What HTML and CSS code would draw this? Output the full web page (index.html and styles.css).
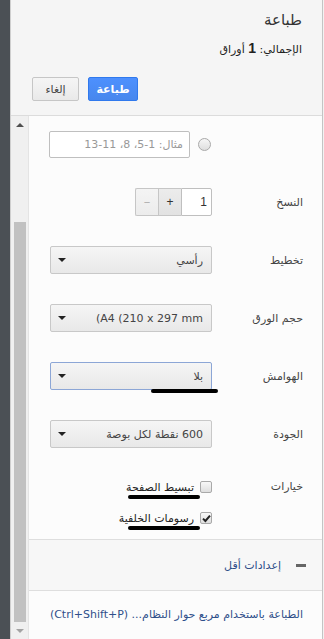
FILE: index.html
```
<!DOCTYPE html>
<html lang="ar">
<head>
    <meta charset="UTF-8">
    <meta name="viewport" content="width=device-width, initial-scale=1.0">
    <title>طباعة</title>
    <link rel="stylesheet" href="styles.css">
</head>
<body>
<div class="app">
    <div class="strip"></div>
    <div class="sidebar">
        <div class="header" dir="rtl">
            <div class="title">طباعة</div>
            <div class="summary">الإجمالي: <b>1</b> أوراق</div>
            <div class="actions">
                <button class="btn btn-print">طباعة</button>
                <button class="btn btn-cancel">إلغاء</button>
            </div>
        </div>

        <div class="main">
            <div class="scrollbar">
                <div class="sb-btn"><span class="tri tri-up"></span></div>
                <div class="sb-track"><div class="sb-thumb"></div></div>
                <div class="sb-btn"><span class="tri tri-down"></span></div>
            </div>

            <div class="settings" dir="rtl">
                <div class="row first">
                    <div class="label"></div>
                    <div class="control range">
                        <span class="radio"></span>
                        <div class="text-input placeholder">مثال: 1-5، 8، 11-13</div>
                    </div>
                </div>

                <div class="row">
                    <div class="label">النسخ</div>
                    <div class="control">
                        <div class="copies">
                            <div class="copies-num">1</div>
                            <div class="step step-plus">+</div>
                            <div class="step step-minus">−</div>
                        </div>
                    </div>
                </div>

                <div class="row">
                    <div class="label">تخطيط</div>
                    <div class="control">
                        <div class="select"><span>رأسي</span><span class="caret"></span></div>
                    </div>
                </div>

                <div class="row">
                    <div class="label">حجم الورق</div>
                    <div class="control">
                        <div class="select"><bdo dir="ltr">(A4 (210 x 297 mm</bdo><span class="caret"></span></div>
                    </div>
                </div>

                <div class="row">
                    <div class="label">الهوامش</div>
                    <div class="control">
                        <div class="select focused"><span>بلا</span><span class="caret"></span>
                            <span class="mark mark-margins"></span>
                        </div>
                    </div>
                </div>

                <div class="row">
                    <div class="label">الجودة</div>
                    <div class="control">
                        <div class="select"><span>600 نقطة لكل بوصة</span><span class="caret"></span></div>
                    </div>
                </div>

                <div class="options">
                    <div class="label">خيارات</div>
                    <div class="option-list">
                        <div class="option">
                            <span class="checkbox"></span>
                            <span class="option-text">تبسيط الصفحة</span>
                            <span class="mark mark-option"></span>
                        </div>
                        <div class="option">
                            <span class="checkbox checked">
                                <svg width="9" height="9" viewBox="0 0 9 9"><path d="M1 4.6 L3.4 7 L8 1.6" fill="none" stroke="#222" stroke-width="2"/></svg>
                            </span>
                            <span class="option-text">رسومات الخلفية</span>
                            <span class="mark mark-option"></span>
                        </div>
                    </div>
                </div>

                <div class="more">
                    <span class="minus"></span>
                    <span class="more-text">إعدادات أقل</span>
                </div>

                <div class="system">الطباعة باستخدام مربع حوار النظام... (Ctrl+Shift+P)</div>
            </div>
        </div>
    </div>
    <div class="edge"></div>
</div>
</body>
</html>
```

FILE: styles.css
```
* { box-sizing: border-box; margin: 0; padding: 0; }
html, body { width: 324px; height: 639px; overflow: hidden; }
body { font-family: "DejaVu Sans", "Noto Sans", sans-serif; font-size: 11px; color: #333; background: #fff; }

.app { display: flex; height: 639px; }
.strip { width: 10px; background: #4b5055; flex: none; }
.sidebar { width: 313px; display: flex; flex-direction: column; border-left: 1px solid #cfcfcf; border-right: 1px solid #c4c4c4; }
.edge { width: 1px; background: #f2f2f2; }

/* header */
.header { height: 116px; background: #f5f5f5; border-bottom: 1px solid #dcdcdc; padding: 9px 20px 0 21px; flex: none; }
.title { font-size: 15px; color: #333; line-height: 22px; }
.summary { margin-top: 8px; font-size: 11px; color: #222; line-height: 18px; letter-spacing: -0.2px; }
.summary b { font-size: 14px; font-family: "Liberation Sans", sans-serif; }
.actions { display: flex; justify-content: flex-end; gap: 9px; margin-top: 18px; }
.btn { height: 24px; font-family: inherit; font-size: 11px; border-radius: 2px; }
.btn-print { width: 50px; color: #fff; font-weight: bold; background: linear-gradient(#4d90fe, #4787ed); border: 1px solid #3079ed; }
.btn-cancel { width: 47px; color: #444; background: linear-gradient(#f5f5f5, #e9e9e9); border: 1px solid #c6c6c6; }

/* body */
.main { flex: 1; display: flex; min-height: 0; }
.scrollbar { width: 18px; background: #f0f0f0; border-right: 1px solid #e4e4e4; display: flex; flex-direction: column; flex: none; }
.sb-btn { height: 17px; display: flex; align-items: center; justify-content: center; }
.sb-track { flex: 1; padding: 89px 2px 0 3px; }
.sb-thumb { height: 400px; background: #c1c1c1; }
.tri { width: 0; height: 0; border-left: 4px solid transparent; border-right: 4px solid transparent; }
.tri-up { border-bottom: 4px solid #505050; }
.tri-down { border-top: 4px solid #a3a3a3; }

.settings { flex: 1; background: #fcfcfc; display: flex; flex-direction: column; }

.row { display: flex; align-items: center; height: 28px; margin-top: 30px; padding-right: 19px; }
.row.first { margin-top: 14px; }
.label { width: 91px; flex: none; color: #444; font-size: 11px; }
.control { display: flex; align-items: center; }

.range { gap: 8px; }
.radio { width: 13px; height: 13px; border-radius: 50%; border: 1px solid #a9a9a9; background: linear-gradient(#f6f6f6, #dedede); margin-right: 1px; }
.text-input { width: 141px; height: 27px; border: 1px solid #bfbfbf; background: #fff; border-radius: 2px; padding: 0 6px; line-height: 25px; }
.placeholder { color: #999; }

.copies { display: flex; }
.copies-num { width: 31px; height: 28px; border: 1px solid #bfbfbf; background: #fff; padding: 0 4px; line-height: 26px; font-family: "Liberation Sans", sans-serif; font-size: 12px; border-radius: 0 2px 2px 0; }
.step { width: 23px; height: 28px; border: 1px solid #c6c6c6; border-right: none; text-align: center; line-height: 26px; font-family: "Liberation Sans", sans-serif; }
.step-plus { background: linear-gradient(#ececec, #e2e2e2); color: #333; font-size: 12px; }
.step-minus { background: linear-gradient(#f4f4f4, #ececec); color: #aaa; border-radius: 2px 0 0 2px; font-size: 11px; }

.select { position: relative; width: 162px; height: 28px; border: 1px solid #c8c8c8; border-radius: 2px; background: linear-gradient(#f5f5f5, #e8e8e8); display: flex; align-items: center; justify-content: space-between; padding: 0 8px 0 7px; color: #444; }
.select.focused { border-color: #8ca6d6; }
.caret { width: 0; height: 0; border-left: 4px solid transparent; border-right: 4px solid transparent; border-top: 4px solid #222; }

/* hand-drawn underline marks on the screenshot */
.mark { position: absolute; height: 4px; background: #000; border-radius: 2px; }
.mark-margins { left: 100px; bottom: -4px; width: 67px; }

.options { display: flex; margin-top: 30px; padding-right: 19px; }
.options .label { line-height: 18px; }
.option-list { display: flex; flex-direction: column; gap: 13px; }
.option { position: relative; display: flex; align-items: center; height: 18px; gap: 6px; }
.checkbox { width: 12px; height: 12px; border: 1px solid #a9a9a9; border-radius: 2px; background: linear-gradient(#f8f8f8, #dedede); display: flex; align-items: center; justify-content: center; }
.option-text { color: #222; }
.mark-option { right: 12px; top: 17px; width: 72px; }

.more { margin-top: 12px; height: 52px; border-top: 1px solid #dedede; border-bottom: 1px solid #dedede; background: #f7f7f7; display: flex; align-items: center; padding-right: 16px; gap: 15px; }
.minus { width: 10px; height: 3px; background: #666; }
.more-text { color: #2f4f8a; }
.system { padding: 15px 19px 0 0; color: #2f4f8a; line-height: 18px; }
```
